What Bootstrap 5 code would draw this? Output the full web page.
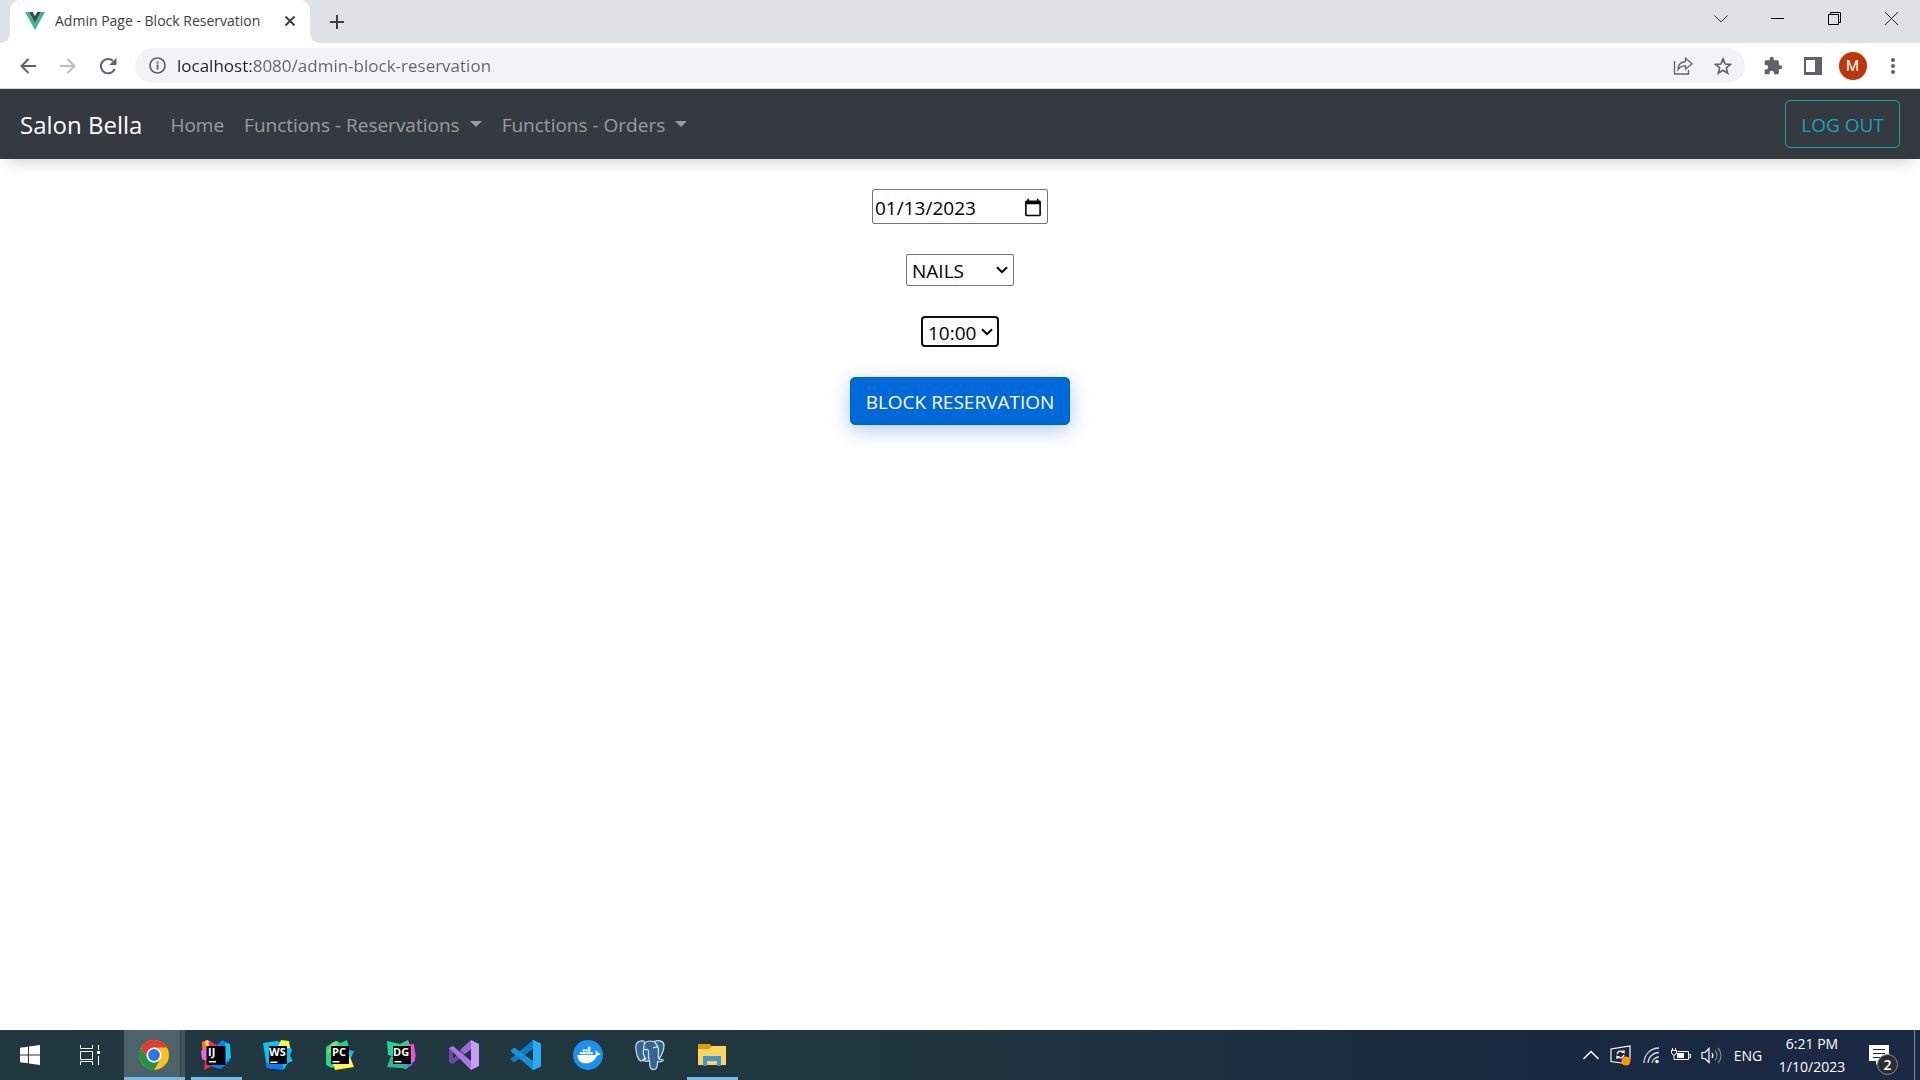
<!DOCTYPE html>
<html lang="en">
<head>
<meta charset="utf-8">
<meta name="viewport" content="width=device-width, initial-scale=1">
<title>Admin Page - Block Reservation</title>
<link href="https://cdn.jsdelivr.net/npm/bootstrap@5.3.0/dist/css/bootstrap.min.css" rel="stylesheet">
<style>
  body { font-family: "Open Sans", "Noto Sans", sans-serif; font-size: 19px; line-height: 30px; color: #212529; }
  svg { display: block; flex: none; }
  button, a { font-family: inherit; }
  .plain { border: 0; background: none; padding: 0; color: inherit; display: flex; align-items: center; justify-content: center; flex: none; }

  /* browser window */
  .tab-strip { background: #dee1e6; height: 43px; padding-left: 10px; }
  .page-tab { position: relative; width: 300px; background: #fff; border-radius: 10px 10px 0 0; padding: 0 10px 2px 15px; gap: 10px; color: #3c4043; font-size: 14px; line-height: 20px; }
  .page-tab::before, .page-tab::after { content: ""; position: absolute; bottom: 0; width: 10px; height: 10px; }
  .page-tab::before { left: -10px; background: radial-gradient(circle at 0 0, #dee1e6 10px, #fff 10px); }
  .page-tab::after { right: -10px; background: radial-gradient(circle at 100% 0, #dee1e6 10px, #fff 10px); }
  .tab-close { width: 20px; height: 20px; }
  .new-tab { width: 35px; height: 35px; margin-left: 9px; }
  .win-btn { width: 57px; height: 37px; color: #000; }
  .tool-bar { background: #fff; padding: 5px 10px; gap: 5px; border-bottom: 1px solid #d5d7da; color: #5f6368; }
  .tool-btn { width: 35px; height: 35px; }
  .omni { margin: 0 5px; height: 35px; border-radius: 18px; background: #f1f3f4; padding: 0 5px 0 12px; gap: 5px; }
  .info-btn { width: 20px; height: 35px; margin-right: 5px; }
  .url-box { border: 0; outline: 0; padding: 0; min-width: 0; font-size: 17px; line-height: 30px; color: #5f6368; -webkit-text-fill-color: transparent; background: linear-gradient(90deg, #202124 76px, #5f6368 76px); -webkit-background-clip: text; background-clip: text; }
  .avatar { width: 28px; height: 28px; border-radius: 50%; background: #bf360c; color: #fff; font-family: Roboto, sans-serif; font-size: 15px; line-height: 28px; }

  /* page */
  .site-nav { background: #343a40; padding: 10px 20px; box-shadow: 0 10px 15px -8px rgba(0, 0, 0, .2); }
  .site-nav .navbar-brand { font-size: 24px; line-height: 38px; padding: 7px 0 5px; margin-right: 18px; color: #fff; }
  .site-nav .navbar-nav .nav-link { padding: 11px 10px 9px; color: rgba(255, 255, 255, .5); }
  .site-nav .dropdown-toggle::after { margin-left: 10px; border-width: 6px 6px 0; vertical-align: 5px; }
  .site-nav .btn, .block-btn { font-size: 19px; line-height: 30px; padding: 9px 0 7px; border-radius: 5px; white-space: nowrap; }
  .log-out { --bs-btn-color: #17a2b8; --bs-btn-border-color: #17a2b8; width: 115px; }
  .slot-form { padding-top: 30px; gap: 30px; }
  .field { font-size: 19px; border: 1px solid #767676; border-radius: 2px; background: #fff; color: #000; }
  .date-field { width: 176px; height: 35px; padding: 2px 2px 0; }
  .date-field::-webkit-calendar-picker-indicator { width: 20px; height: 20px; padding: 2px; margin-right: 0; }
  .date-field::-webkit-datetime-edit, .date-field::-webkit-datetime-edit-fields-wrapper { padding: 0; }
  .date-field::-webkit-datetime-edit-month-field, .date-field::-webkit-datetime-edit-day-field, .date-field::-webkit-datetime-edit-year-field { padding: 0; }
  .pick { appearance: none; padding: 2px 5px 0; line-height: 28px; background: #fff url("data:image/svg+xml,%3Csvg xmlns='http://www.w3.org/2000/svg' width='12' height='8' fill='none' stroke='%23000' stroke-width='2'%3E%3Cpath d='M1 1.2l5 5 5-5'/%3E%3C/svg%3E") no-repeat right 5px center; }
  .service { width: 108px; height: 32px; }
  .hour { width: 78px; height: 31px; border: 2px solid #101010; border-radius: 4px; background-position: right 4px center; line-height: 26px; }
  .block-btn { width: 220px; background: #0069d9; color: #fff; border-color: #0062cc; box-shadow: 0 5px 20px rgba(0, 80, 200, .3); }

  /* taskbar */
  .task-bar { height: 50px; color: #fff; background: linear-gradient(90deg, #213840 0, #21373f 45%, #1c2f40 65%, #1a2942 80%, #1b2944 100%); }
  .sys-btn { width: 60px; height: 50px; }
  .app-group { margin-left: 3px; }
  .app-btn { position: relative; width: 62px; height: 50px; }
  .app-btn.running::after { content: ""; position: absolute; left: 6px; right: 5px; bottom: 0; height: 3px; background: #76b9ed; }
  .app-btn.current { background: linear-gradient(90deg, transparent 1px, #4e626a 1px, #4e626a 57px, #2e434b 57px, #2e434b 58px, #42565e 58px); }
  .app-btn.current::after { left: 1px; right: 0; }
  .tray-btn { width: 30px; height: 50px; }
  .tray-text { font-size: 14px; line-height: 23px; }
  .lang { width: 44px; }
  .clock { width: 74px; margin-left: 5px; flex-direction: column; }
  .notes { position: relative; width: 60px; height: 50px; margin-right: 5px; }
  .note-count { position: absolute; left: 28px; top: 24px; width: 21px; height: 21px; border: 1px solid #8a8d92; border-radius: 50%; background: #2b2d31; font-size: 14px; line-height: 19px; font-weight: 600; }
  .show-desk { width: 6px; height: 50px; border-left: 1px solid #7d8794; }
  .ide { font-family: "Open Sans", sans-serif; font-weight: 700; fill: #fff; font-size: 11px; }
</style>
<script src="https://cdn.jsdelivr.net/npm/bootstrap@5.3.0/dist/js/bootstrap.bundle.min.js"></script>
</head>
<body class="d-flex flex-column min-vh-100">

<header>
  <div class="tab-strip d-flex">
    <div class="page-tab d-flex align-items-center">
      <svg width="20" height="18" viewBox="0 0 20 18"><path fill="#41b883" d="M0 0h4l6 10 6-10h4L10 18z"/><path fill="#35495e" d="M4 0h3.700L10 4l2.300-4H16l-6 10.500z"/></svg>
      <span class="flex-grow-1 text-nowrap">Admin Page - Block Reservation</span>
      <button class="plain tab-close" aria-label="Close tab"><svg width="10" height="10" stroke="#3c4043" stroke-width="2"><path d="M.5 .5l9 9M9.500 .5l-9 9"/></svg></button>
    </div>
    <button class="plain new-tab align-self-center" aria-label="New tab"><svg width="16" height="16" stroke="#3c4043" stroke-width="2"><path d="M8 1v14M1 8h14"/></svg></button>
    <div class="d-flex ms-auto">
      <button class="plain win-btn" aria-label="Search tabs"><svg width="14" height="8" fill="none" stroke="#333"><path d="M.5 .5L7 7l6.500-6.500"/></svg></button>
      <button class="plain win-btn" aria-label="Minimize"><svg width="13" height="1"><path fill="#000" d="M0 0h13v1H0z"/></svg></button>
      <button class="plain win-btn" aria-label="Restore"><svg width="13" height="13" fill="none" stroke="#000"><path d="M.5 2.500h10v10H.5zM2.500 2.500v-2h10v10h-2"/></svg></button>
      <button class="plain win-btn" aria-label="Close window"><svg width="13" height="13" stroke="#222"><path d="M0 0l13 13M13 0L0 13"/></svg></button>
    </div>
  </div>
  <div class="tool-bar d-flex align-items-center">
    <button class="plain tool-btn" aria-label="Back"><svg width="16" height="16" fill="none" stroke="#5f6368" stroke-width="2"><path d="M16 8H2M8.500 1L1.500 8l7 7"/></svg></button>
    <button class="plain tool-btn" aria-label="Forward"><svg width="16" height="16" fill="none" stroke="#bbbdbf" stroke-width="2"><path d="M0 8h14M7.500 1l7 7-7 7"/></svg></button>
    <button class="plain tool-btn" aria-label="Reload"><svg width="18" height="18" viewBox="0 0 18 18"><path d="M15.700 12A7.200 7.200 0 1 1 14 3.800" fill="none" stroke="#5f6368" stroke-width="2"/><path fill="#5f6368" d="M17.500 .7V8h-7.300z"/></svg></button>
    <div class="omni d-flex align-items-center flex-grow-1">
      <button class="plain info-btn" aria-label="Site information"><svg width="17" height="17" viewBox="0 0 17 17"><circle cx="8.500" cy="8.500" r="7.500" fill="none" stroke="#5f6368" stroke-width="1.700"/><path fill="#5f6368" d="M7.600 7.600h1.900v5H7.600zM7.600 4.500h1.900v1.900H7.600z"/></svg></button>
      <input class="url-box flex-grow-1" type="text" aria-label="Address" value="localhost:8080/admin-block-reservation">
      <button class="plain tool-btn" aria-label="Share"><svg width="20" height="20" viewBox="0 0 20 20" fill="none" stroke="#5f6368" stroke-width="1.300"><path d="M1.500 5v13h14v-4"/><path d="M5 13.500C5.300 8.500 8.500 5.800 12.500 5.500V2.200L19 7.800l-6.500 5.400v-3.400C9 9.600 7 10.800 5 13.500z"/></svg></button>
      <button class="plain tool-btn" aria-label="Bookmark"><svg width="18" height="18" viewBox="0 0 18 18"><path fill="none" stroke="#5f6368" stroke-width="1.600" d="M9 1.900l2.100 5.100 5.400.4-4.200 3.500 1.400 5.300L9 13.300l-4.700 2.900 1.400-5.300L1.500 7.400l5.400-.4z"/></svg></button>
    </div>
    <button class="plain tool-btn" aria-label="Extensions"><svg width="20" height="20" viewBox="0 0 24 24"><path fill="#5f6368" d="M20.500 11H19V7c0-1.100-.9-2-2-2h-4V3.500a2.500 2.500 0 0 0-5 0V5H4c-1.100 0-2 .9-2 2v3.800h1.500a2.700 2.700 0 0 1 0 5.400H2V20c0 1.100.9 2 2 2h3.800v-1.500a2.700 2.700 0 0 1 5.400 0V22H17c1.100 0 2-.9 2-2v-4h1.500a2.500 2.500 0 0 0 0-5z"/></svg></button>
    <button class="plain tool-btn" aria-label="Side panel"><svg width="18" height="18"><path fill="#5f6368" fill-rule="evenodd" d="M0 0h18v18H0zM2 3v12h9V3z"/></svg></button>
    <button class="plain tool-btn" aria-label="Profile"><span class="avatar">M</span></button>
    <button class="plain tool-btn" aria-label="Menu"><svg width="4" height="16" fill="#5f6368"><circle cx="2" cy="2" r="2"/><circle cx="2" cy="8" r="2"/><circle cx="2" cy="14" r="2"/></svg></button>
  </div>
</header>

<nav class="site-nav navbar navbar-expand navbar-dark">
  <a class="navbar-brand" href="#">Salon Bella</a>
  <ul class="navbar-nav me-auto">
    <li class="nav-item"><a class="nav-link" href="#">Home</a></li>
    <li class="nav-item dropdown"><a class="nav-link dropdown-toggle" href="#" role="button" data-bs-toggle="dropdown">Functions - Reservations</a></li>
    <li class="nav-item dropdown"><a class="nav-link dropdown-toggle" href="#" role="button" data-bs-toggle="dropdown">Functions - Orders</a></li>
  </ul>
  <button class="btn btn-outline-info log-out" type="button">LOG OUT</button>
</nav>

<main class="flex-grow-1">
  <form class="slot-form d-flex flex-column align-items-center">
    <input class="field date-field" type="date" id="day" aria-label="Date" value="2023-01-13">
    <select class="field pick service" id="service" aria-label="Service"><option>NAILS</option></select>
    <select class="field pick hour" id="hour" aria-label="Hour"><option>10:00</option></select>
    <button class="btn block-btn" type="button">BLOCK RESERVATION</button>
  </form>
</main>

<footer class="task-bar d-flex align-items-center">
  <button class="plain sys-btn" aria-label="Start"><svg width="20" height="20" fill="#fff"><path d="M0 2.800L8 1.700v7.800H0zM9 1.500L20 0v9.500H9zM0 10.500h8v7.800L0 17.200zM9 10.500h11V20L9 18.500z"/></svg></button>
  <button class="plain sys-btn" aria-label="Task view"><svg width="20" height="20" fill="none" stroke="#fff"><path d="M.5 0v3.500h12V0M.5 6.500h12v8H.5zM.5 20v-3.500h12V20M18.500 0v5M18.500 11v9"/><path fill="#fff" stroke="none" d="M17 6h3v3h-3z"/></svg></button>
  <div class="app-group d-flex">
    <button class="plain app-btn running current" aria-label="Google Chrome"><svg width="30" height="30" viewBox="0 0 30 30"><circle cx="15" cy="15" r="15" fill="#fbc116"/><path fill="#e33b2e" d="M2 7.500A15 15 0 0 1 28 7.500H15L8.500 18.700z"/><path fill="#229342" d="M2 7.500l6.500 11.300A7.500 7.500 0 0 0 21.500 18.800L15 30A15 15 0 0 1 2 7.500z"/><circle cx="15" cy="15" r="7.500" fill="#fff"/><circle cx="15" cy="15" r="5.900" fill="#2878e8"/></svg></button>
    <button class="plain app-btn running" aria-label="IntelliJ IDEA"><svg width="30" height="30" viewBox="0 0 30 30"><path fill="#fc801d" d="M1 2l6-2 8 8-8 10-5 2z"/><path fill="#fcd06a" d="M4 1l3-1 3 7-4 1z"/><path fill="#e46ae0" d="M0 11l8-4 7 12-8 3-6-3z"/><path fill="#fe2857" d="M8 0l9 6-3 9-6-7zM4 21l8 2-3 4-6 3z"/><path fill="#087cfa" d="M16 5l5-5 8 4-3 5 3 12-9 8-12-3z"/><path fill="#18c5f2" d="M24 3l5 1 1 14-6 4z"/><path d="M5.500 6h19v19h-19z"/><path fill="#fff" d="M8 21h7v1.500H8z"/><text x="7" y="15.500" class="ide">IJ</text></svg></button>
    <button class="plain app-btn" aria-label="WebStorm"><svg width="30" height="30" viewBox="0 0 30 30"><path fill="#07c3f2" d="M0 3l14-2 12 4 3 5-2 6 3 5-5 2-4 6L4 28z"/><path fill="#087cfa" d="M3 23l17 1v6L4 28z"/><path fill="#fcf84a" d="M18 0l8 1 1 7-13 1z"/><path d="M6 6h18v18H6z"/><path fill="#fff" d="M7.500 21.500h7V23h-7z"/><text x="6" y="15.500" class="ide">WS</text></svg></button>
    <button class="plain app-btn" aria-label="PyCharm"><svg width="30" height="30" viewBox="0 0 30 30"><path fill="#21d789" d="M1 7l9-6 6 2 6-3 2 8 1 12-18 8-6-3z"/><path fill="#88e15a" d="M7 3l6-2-3 10-8 2z"/><path fill="#07c3f2" d="M23 10l6 1-3 7h-3z"/><path fill="#fcf84a" d="M25 17l4 10-19 3-2-6z"/><path d="M6 6h18v18H6z"/><path fill="#fff" d="M7.500 21h7v1.500h-7z"/><text x="7" y="15.500" class="ide">PC</text></svg></button>
    <button class="plain app-btn" aria-label="DataGrip"><svg width="30" height="30" viewBox="0 0 30 30"><path fill="#22d88f" d="M0 1l13 3 8-4 4 10-13 8-11-3z"/><path fill="#6d6af0" d="M22 7l5 0 2 9-4 9-6 4-8-3z"/><path fill="#ff4ae8" d="M17 5l10-1 1 17-4 2z"/><path fill="#2bb89a" d="M4 16l-4 11 14 1 6 1 1-7z"/><path d="M6 6h18v18H6z"/><path fill="#fff" d="M7.500 21h7v1.500h-7z"/><text x="6" y="15.500" class="ide">DG</text></svg></button>
    <button class="plain app-btn" aria-label="Visual Studio"><svg width="30" height="30" viewBox="0 0 30 30"><path fill="#6c48a5" d="M0 8l4-2v18l-4-2zM22 0v9L4 24l-3-2z"/><path fill="#a779df" d="M4 6l18 15v9L0 8z"/><path fill="#9a6bd8" d="M22 0v9l-6 5-5-4z"/><path fill="#c79bf5" d="M22 0l8 4v22l-8 4z"/></svg></button>
    <button class="plain app-btn" aria-label="Visual Studio Code"><svg width="30" height="30" viewBox="0 0 30 30"><path fill="#0d7bc4" d="M22 0v9L4 22H2.500L0 20v-1.500z"/><path fill="#1590dc" d="M22 30v-9L4 8H2.500L0 10v1.500z"/><path fill="#2ba9f2" d="M21 0h1.500L30 3.500v23L22.500 30H21l1-1V1z"/></svg></button>
    <button class="plain app-btn" aria-label="Docker"><svg width="30" height="30" viewBox="0 0 30 30"><circle cx="15" cy="15" r="15" fill="#1d8ff0"/><path fill="#fff" d="M4.500 15h17.200c.8 0 1.200-.3 1.300-.8-.8-1.200-.6-2.700.3-3.700 1.100.8 1.600 1.600 1.700 2.700.8-.2 1.700-.1 2.400.3-.6 1.300-1.700 1.900-3.300 1.900C21.800 20.600 18 23.300 12.500 23.300 7.600 23.300 4.500 20.500 4.500 15zM7 12h2.300v2.300H7zM9.700 12H12v2.300H9.700zM12.400 12h2.300v2.300h-2.300zM15.100 12h2.300v2.300h-2.300zM17.800 12h1.800v2.300h-1.800zM9.700 9.300H12v2.300H9.700zM12.400 9.300h2.300v2.300h-2.300zM15.100 9.300h2.300v2.300h-2.300zM15.100 6.800h2.300v2.100h-2.300z"/></svg></button>
    <button class="plain app-btn" aria-label="PostgreSQL"><svg width="30" height="30" viewBox="0 0 30 30"><g fill="#336791" stroke="#d5e0e8" stroke-width="1.200" stroke-linejoin="round"><path d="M9 1C3 0 .6 3 .8 8 1 13 3 20 6 21c1.500.3 3-2 4-3.500L12 16z"/><path d="M19 1.500c5-2 10-.5 10 4C29 11 26 16 24 19l4.500 1c-1 1.500-4 2-6 1.500-.3 4 .2 8-4 8-4.500 0-3.500-5-4-9-2 1-5 1-7-.5 2-.2 3-.5 3.500-1.500-3-2-3-5-2.500-9C9 5 9 1 14 1c2 0 3.500 0 5 .5z"/><path fill="none" d="M19 1.500c3 3 4.500 6 4.500 9 0 4-1 5 .5 8.500M9 10c4-1.500 5 0 4.500 4-.3 2-.5 4 1 6M18 8c2-1 4-1 5.500-.5"/></g></svg></button>
    <button class="plain app-btn running" aria-label="File Explorer"><svg width="28" height="24" viewBox="0 0 28 24"><path fill="#e19e00" d="M0 1h12l2 3v5H0z"/><path fill="#ffd45e" d="M14 3h14v19H0V6h11z"/><path fill="#3f94d6" d="M5 23V13h18v10h-4v-5H9v5z"/></svg></button>
  </div>

  <div class="d-flex align-items-center ms-auto tray-text">
    <button class="plain tray-btn" aria-label="Show hidden icons"><svg width="16" height="10" fill="none" stroke="#fff" stroke-width="1.400"><path d="M.5 9L8 1.500 15.500 9"/></svg></button>
    <button class="plain tray-btn" aria-label="Windows Update"><svg width="22" height="22" fill="none" stroke="#fff" stroke-width="1.200"><path d="M15 19.500l-14-2V5l19-3v13M7 10c1-3 5-4 7-1.500V6M14 8.500h-2.500M14 11c-1 3-5 4-7 1.500V15M7 12.500h2.500"/><circle cx="16" cy="17" r="4.500" fill="#ff9800" stroke="none"/></svg></button>
    <button class="plain tray-btn" aria-label="Wi-Fi"><svg width="17" height="17" fill="none" stroke="#d4d9df" stroke-width="1.300"><path d="M1 16A15 15 0 0 1 16 1M5 16A11 11 0 0 1 16 5.500M9 16a7 7 0 0 1 7-6"/><circle cx="14" cy="14.500" r="1.800" fill="#fff" stroke="none"/></svg></button>
    <button class="plain tray-btn" aria-label="Battery"><svg width="20" height="14" fill="none" stroke="#fff"><path d="M6.500 3.500h11v8h-12M18 6.500h1.500v3H18M0 2.500h6M.5 3v2l1.500 2h2l1.500-2V3M1.500 0v2M4.500 0v2M3 7v4.500h3"/><path fill="#fff" stroke="none" d="M6 5h7v5H6z"/></svg></button>
    <button class="plain tray-btn" aria-label="Volume"><svg width="21" height="17" fill="none" stroke="#fff" stroke-width="1.200"><path d="M1 5.500h3l4-4v14l-4-4H1zM11 6c1 1.500 1 3.500 0 5"/><path stroke="#7d8794" d="M14 3.500c2.500 3 2.500 7 0 10M17 1c4 4.500 4 10.500 0 15"/></svg></button>
    <button class="plain lang">ENG</button>
    <button class="plain clock"><span>6:21 PM</span><span>1/10/2023</span></button>
    <button class="plain notes" aria-label="Notifications"><svg width="20" height="20"><path fill="#fff" d="M0 0h20v16h-9l-4 4v-4H0z"/><path stroke="#1b2944" d="M4 4.500h12M4 8.500h12M4 12.500h8"/></svg><span class="note-count">2</span></button>
    <button class="plain show-desk" aria-label="Show desktop"></button>
  </div>
</footer>
</body>
</html>
